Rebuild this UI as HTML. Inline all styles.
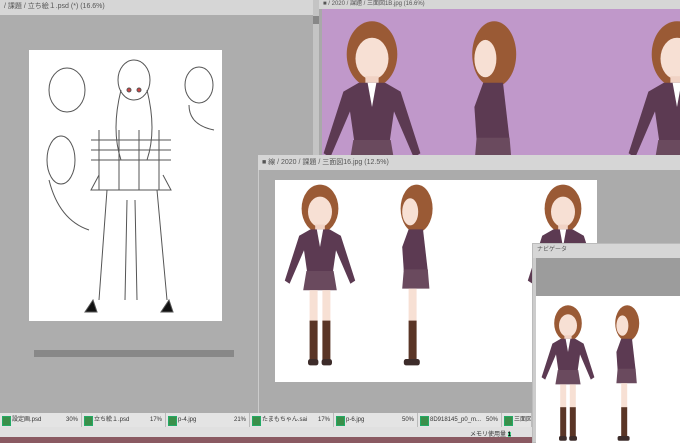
<!DOCTYPE html>
<html><head><meta charset="utf-8"><style>
*{margin:0;padding:0;box-sizing:border-box}
body{width:680px;height:443px;overflow:hidden;background:#a9a9a9;position:relative;font-family:"Liberation Sans","Noto Sans CJK JP",sans-serif;font-size:7px;color:#333}
.a{position:absolute}
.tb{background:#d6d6d6;color:#555;font-size:7px;line-height:13px;padding-left:4px;white-space:nowrap;overflow:hidden}
.tab{position:absolute;top:413px;height:14px;background:#e4e4e4;border-right:1px solid #bbb;font-size:6px;line-height:14px;padding-left:12px;color:#333;white-space:nowrap;overflow:hidden}
.tab:before{content:"";position:absolute;left:2px;top:3px;width:7px;height:8px;background:#3a8f4a;border:1px solid #2a6;}
.tab span{position:absolute;right:3px}
</style></head><body>
<svg width="0" height="0" style="position:absolute">
<defs>
<symbol id="g" viewBox="0 0 100 240">
<ellipse cx="50" cy="32" rx="23" ry="30" fill="#9a5a35"/>
<ellipse cx="50" cy="36" rx="15" ry="19" fill="#f7e0d4"/>
<rect x="44" y="52" width="12" height="8" fill="#f1d3c5"/>
<polygon points="38,58 62,58 76,66 94,122 88,126 70,84 66,112 34,112 30,84 12,126 6,122 24,66" fill="#5c3a52"/>
<polygon points="46,58 54,58 50,80" fill="#fff"/>
<polygon points="33,110 67,110 71,134 29,134" fill="#6a4a5e"/>
<rect x="37" y="134" width="10" height="40" fill="#f7e0d4"/>
<rect x="53" y="134" width="10" height="40" fill="#f7e0d4"/>
<rect x="37" y="172" width="10" height="50" fill="#5a3526"/>
<rect x="53" y="172" width="10" height="50" fill="#5a3526"/>
<rect x="35" y="220" width="13" height="8" rx="3" fill="#3d2c2a"/>
<rect x="52" y="220" width="13" height="8" rx="3" fill="#3d2c2a"/>
</symbol>
<symbol id="s" viewBox="0 0 100 240">
<ellipse cx="52" cy="32" rx="20" ry="30" fill="#9a5a35"/>
<ellipse cx="44" cy="36" rx="10" ry="17" fill="#f7e0d4"/>
<polygon points="42,58 60,58 66,110 36,110 34,80" fill="#5c3a52"/>
<polygon points="36,108 66,108 68,132 34,132" fill="#6a4a5e"/>
<rect x="42" y="132" width="10" height="42" fill="#f7e0d4"/>
<rect x="42" y="172" width="10" height="50" fill="#5a3526"/>
<rect x="36" y="220" width="20" height="8" rx="3" fill="#3d2c2a"/>
</symbol>
</defs></svg>

<!-- left window -->
<div class="a tb" style="left:0;top:0;width:315px;height:15px">/ 課題 / 立ち絵１.psd (*) (16.6%)</div>
<div class="a" style="left:0;top:15px;width:313px;height:398px;background:#adadad"></div>
<div class="a" style="left:313px;top:0;width:6px;height:413px;background:#c4c4c4"></div>
<div class="a" style="left:313px;top:16px;width:6px;height:8px;background:#888"></div>
<div class="a" style="left:29px;top:50px;width:193px;height:271px;background:#fff"></div>
<svg class="a" style="left:29px;top:50px" width="193" height="271" fill="none" stroke="#555" stroke-width="1">
<ellipse cx="105" cy="30" rx="16" ry="20"/>
<path d="M92 40 q-10 40 0 70 M118 40 q10 40 0 70 M62 90 h80 M62 100 h80 M62 110 h80 M70 80 v60 M90 80 v60 M110 80 v60 M130 80 v60"/>
<path d="M70 125 l-8 15 h80 l-8 -15 M78 140 l-8 110 M128 140 l10 110 M98 150 l-2 100 M106 150 l2 100"/>
<path d="M64 250 l-8 12 h12z M140 250 l4 12 h-12z" fill="#111"/>
<ellipse cx="38" cy="40" rx="18" ry="22"/><ellipse cx="170" cy="35" rx="14" ry="18"/>
<ellipse cx="32" cy="110" rx="14" ry="24"/><path d="M20 130 q10 40 40 50 M160 55 q0 20 25 25"/>
<circle cx="100" cy="40" r="2" fill="#c44"/><circle cx="110" cy="40" r="2" fill="#c44"/>
</svg>
<div class="a" style="left:34px;top:350px;width:200px;height:7px;background:#888"></div>

<!-- top right window -->
<div class="a tb" style="left:319px;top:0;width:361px;height:9px;line-height:9px;font-size:6px">■ / 2020 / 課題 / 三面図1B.jpg (16.6%)</div>
<div class="a" style="left:322px;top:9px;width:358px;height:146px;background:#c098ca;overflow:hidden">
<svg class="a" style="left:-5px;top:10px" width="110" height="264"><use href="#g"/></svg>
<svg class="a" style="left:115px;top:10px" width="110" height="264"><use href="#s"/></svg>
<svg class="a" style="left:300px;top:10px" width="110" height="264"><use href="#g"/></svg>
</div>

<!-- middle window -->
<div class="a tb" style="left:258px;top:155px;width:422px;height:15px;line-height:15px">■ 線 / 2020 / 課題 / 三面図16.jpg (12.5%)</div>
<div class="a" style="left:258px;top:170px;width:422px;height:243px;background:#ababab;border-left:1px solid #ccc"></div>
<div class="a" style="left:275px;top:180px;width:322px;height:202px;background:#fff;overflow:hidden">
<svg class="a" style="left:5px;top:3px" width="80" height="192"><use href="#g"/></svg>
<svg class="a" style="left:100px;top:3px" width="80" height="192"><use href="#s"/></svg>
<svg class="a" style="left:248px;top:3px" width="80" height="192"><use href="#g"/></svg>
</div>

<!-- navigator -->
<div class="a" style="left:532px;top:243px;width:148px;height:200px;background:#ccc;border:1px solid #bbb"></div>
<div class="a tb" style="left:533px;top:244px;width:147px;height:14px;font-size:6px">ナビゲータ</div>
<div class="a" style="left:536px;top:258px;width:144px;height:38px;background:#9c9c9c"></div>
<div class="a" style="left:536px;top:296px;width:144px;height:147px;background:#fff;overflow:hidden">
<svg class="a" style="left:2px;top:8px" width="60" height="144"><use href="#g"/></svg>
<svg class="a" style="left:60px;top:8px" width="60" height="144"><use href="#s"/></svg>
</div>

<!-- tabs -->
<div class="a" style="left:0;top:413px;width:532px;height:30px;background:#e0e0e0"></div>
<div class="tab" style="left:0;width:82px">設定画.psd<span>30%</span></div>
<div class="tab" style="left:82px;width:84px">立ち絵１.psd<span>17%</span></div>
<div class="tab" style="left:166px;width:84px">p-4.jpg<span>21%</span></div>
<div class="tab" style="left:250px;width:84px">たまもちゃん.sai<span>17%</span></div>
<div class="tab" style="left:334px;width:84px">p-6.jpg<span>50%</span></div>
<div class="tab" style="left:418px;width:84px">8D918145_p0_m...<span>50%</span></div>
<div class="tab" style="left:502px;width:30px">三面図16</div>
<div class="a" style="left:470px;top:429px;font-size:6px;color:#333">メモリ使用量 <b style="background:#4c8;color:#000">1</b></div>
<div class="a" style="left:0;top:437px;width:532px;height:6px;background:#8a5a62"></div>
</body></html>
